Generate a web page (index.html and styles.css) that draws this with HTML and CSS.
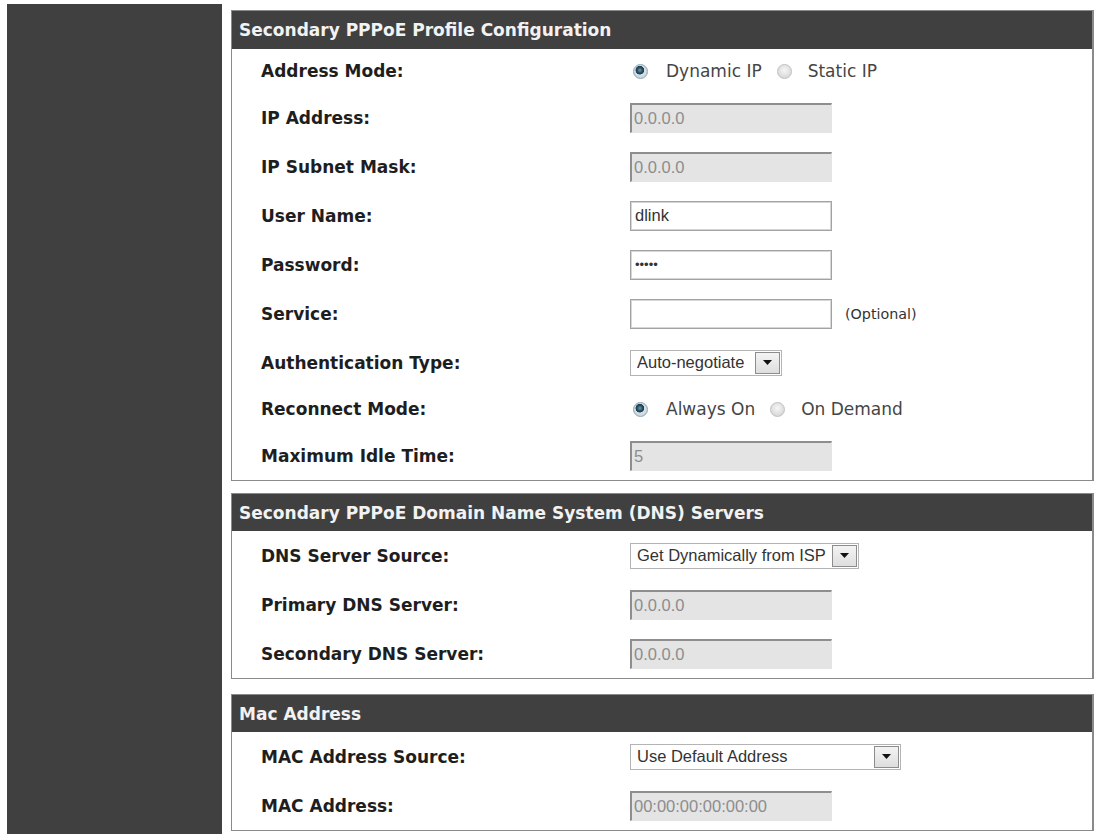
FILE: index.html
```html
<!DOCTYPE html>
<html lang="en">
<head>
<meta charset="utf-8">
<title>Secondary PPPoE</title>
<link rel="stylesheet" href="styles.css">
</head>
<body>
<div class="sidebar"></div>
<main class="main">
  <section class="panel panel-first">
    <h2 class="panel-head head-tall">Secondary PPPoE Profile Configuration</h2>
    <div class="panel-body">
      <div class="row row-radio">
        <div class="label">Address Mode:</div>
        <div class="ctrl">
          <span class="radio on"></span><span class="opt">Dynamic IP</span>
          <span class="radio"></span><span class="opt">Static IP</span>
        </div>
      </div>
      <div class="row">
        <div class="label">IP Address:</div>
        <div class="ctrl"><input class="field field-off" type="text" value="0.0.0.0" disabled></div>
      </div>
      <div class="row">
        <div class="label">IP Subnet Mask:</div>
        <div class="ctrl"><input class="field field-off" type="text" value="0.0.0.0" disabled></div>
      </div>
      <div class="row">
        <div class="label">User Name:</div>
        <div class="ctrl"><input class="field" type="text" value="dlink"></div>
      </div>
      <div class="row">
        <div class="label">Password:</div>
        <div class="ctrl"><input class="field field-pass" type="password" value="dlink"></div>
      </div>
      <div class="row">
        <div class="label">Service:</div>
        <div class="ctrl"><input class="field" type="text" value=""><span class="hint">(Optional)</span></div>
      </div>
      <div class="row">
        <div class="label">Authentication Type:</div>
        <div class="ctrl">
          <div class="select sel-auth"><span class="sel-text">Auto-negotiate</span><span class="sel-btn"><svg width="9" height="5" viewBox="0 0 9 5"><path d="M0 0H9L4.5 5Z" fill="#111"/></svg></span></div>
        </div>
      </div>
      <div class="row row-radio">
        <div class="label">Reconnect Mode:</div>
        <div class="ctrl">
          <span class="radio on"></span><span class="opt">Always On</span>
          <span class="radio"></span><span class="opt">On Demand</span>
        </div>
      </div>
      <div class="row">
        <div class="label">Maximum Idle Time:</div>
        <div class="ctrl"><input class="field field-off" type="text" value="5" disabled></div>
      </div>
    </div>
  </section>

  <section class="panel panel-second">
    <h2 class="panel-head">Secondary PPPoE Domain Name System (DNS) Servers</h2>
    <div class="panel-body">
      <div class="row">
        <div class="label">DNS Server Source:</div>
        <div class="ctrl">
          <div class="select sel-dns"><span class="sel-text">Get Dynamically from ISP</span><span class="sel-btn"><svg width="9" height="5" viewBox="0 0 9 5"><path d="M0 0H9L4.5 5Z" fill="#111"/></svg></span></div>
        </div>
      </div>
      <div class="row">
        <div class="label">Primary DNS Server:</div>
        <div class="ctrl"><input class="field field-off" type="text" value="0.0.0.0" disabled></div>
      </div>
      <div class="row">
        <div class="label">Secondary DNS Server:</div>
        <div class="ctrl"><input class="field field-off" type="text" value="0.0.0.0" disabled></div>
      </div>
    </div>
  </section>

  <section class="panel panel-third">
    <h2 class="panel-head">Mac Address</h2>
    <div class="panel-body">
      <div class="row">
        <div class="label">MAC Address Source:</div>
        <div class="ctrl">
          <div class="select sel-mac"><span class="sel-text">Use Default Address</span><span class="sel-btn"><svg width="9" height="5" viewBox="0 0 9 5"><path d="M0 0H9L4.5 5Z" fill="#111"/></svg></span></div>
        </div>
      </div>
      <div class="row">
        <div class="label">MAC Address:</div>
        <div class="ctrl"><input class="field field-off" type="text" value="00:00:00:00:00:00" disabled></div>
      </div>
    </div>
  </section>
</main>
</body>
</html>
```

FILE: styles.css
```css
html, body {
  margin: 0;
  background: #ffffff;
}

body {
  display: flex;
  align-items: stretch;
  min-height: 100vh;
  box-sizing: border-box;
  padding: 4px 0 0 7px;
  font-family: "DejaVu Sans", Verdana, sans-serif;
  color: #222;
  overflow: hidden;
}

.sidebar {
  width: 215px;
  flex: 0 0 215px;
  background: #404040;
}

.main {
  width: 863px;
  margin-left: 9px;
  padding-top: 6px;
}

.panel {
  border: 1px solid #8a8a8a;
  border-right-width: 2px;
  box-sizing: border-box;
  background: #fff;
}

.panel-second {
  margin-top: 12px;
}

.panel-third {
  margin-top: 15px;
}

.panel-head {
  margin: 0;
  height: 37px;
  display: flex;
  align-items: center;
  padding-left: 7px;
  background: #404040;
  color: #f2f2f2;
  font-size: 17px;
  font-weight: bold;
}

.head-tall {
  height: 38px;
}

.row {
  display: flex;
  align-items: center;
  height: 49px;
}

.row-radio {
  height: 44px;
}

.label {
  width: 398px;
  flex: 0 0 398px;
  box-sizing: border-box;
  padding-left: 29px;
  font-size: 17px;
  font-weight: bold;
  color: #1e1e1e;
}

.ctrl {
  display: flex;
  align-items: center;
}

.field {
  width: 202px;
  height: 30px;
  box-sizing: border-box;
  margin: 0;
  padding: 0 4px;
  font-family: "Liberation Sans", Arial, sans-serif;
  font-size: 16.5px;
  color: #333;
  background: #fff;
  border: 1px solid #a3a3a3;
  box-shadow: inset 0 0 0 1px #d6d6d6;
  border-radius: 0;
  outline: none;
}

.field-off {
  color: #8d8d8d;
  background: #e4e4e4;
  border-top: 2px solid #8e8e8e;
  border-left: 2px solid #8e8e8e;
  border-right: 1px solid #e4e4e4;
  border-bottom: 1px solid #e4e4e4;
  box-shadow: none;
  padding-left: 2px;
}

.field-pass {
  font-size: 13px;
  letter-spacing: 0;
}

.hint {
  margin-left: 13px;
  font-size: 14.3px;
  color: #333;
}

.radio {
  width: 15px;
  height: 15px;
  box-sizing: border-box;
  border-radius: 50%;
  border: 1px solid #c0c0c0;
  background: radial-gradient(circle at 50% 40%, #f6f6f6 0, #dadada 70%, #cdcdcd 100%);
  flex: 0 0 15px;
  margin-left: 15px;
  margin-right: 16px;
}

.radio:first-child {
  margin-left: 3px;
  margin-right: 18px;
}

.radio.on {
  border-color: #8fa6b4;
  background:
    radial-gradient(circle at 45% 40%, #7499ad 0, #2c5366 2.5px, #1d3c4c 4px, rgba(0,0,0,0) 4.6px),
    radial-gradient(circle at 50% 45%, #eef3f6 0, #c3d2db 80%);
}

.opt {
  font-size: 17px;
  color: #454545;
}

.select {
  height: 26px;
  box-sizing: border-box;
  border: 1px solid #b4b4b4;
  background: #fff;
  display: flex;
  align-items: center;
  font-family: "Liberation Sans", Arial, sans-serif;
  font-size: 16.5px;
  color: #333;
}

.sel-text {
  flex: 1;
  padding-left: 6px;
  white-space: nowrap;
}

.sel-btn {
  width: 25px;
  height: 22px;
  box-sizing: border-box;
  margin-right: 1px;
  border: 1px solid #8d8d8d;
  background: linear-gradient(#f3f3f3, #dedede);
  display: flex;
  align-items: center;
  justify-content: center;
}

.sel-auth {
  width: 152px;
}

.sel-dns {
  width: 229px;
}

.sel-mac {
  width: 271px;
}
```
